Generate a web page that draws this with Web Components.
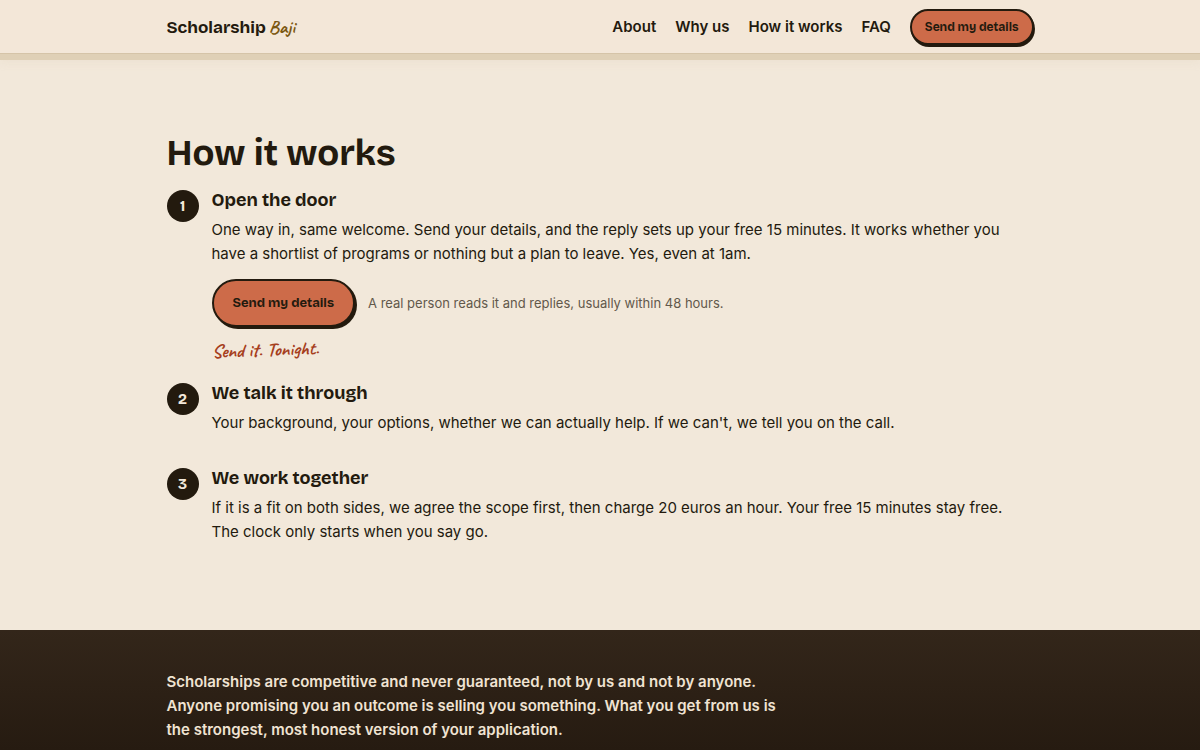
<!DOCTYPE html>
<html lang="en">
<head>
<meta charset="utf-8">
<meta name="viewport" content="width=device-width, initial-scale=1">
<title>Scholarship Baji</title>
<style>
html {
  --ink: #231a0e;
  --paper: #f2e8da;
  --clay: #cd6b49;
  --display: "Bricolage Grotesque", Inter, sans-serif;
  --hand: Caveat, "Caveat Brush", Lato, cursive;
  --page: 867px;
}
body { margin: 0; background: var(--paper); color: var(--ink); font: 15px/24px Inter, sans-serif; }
</style>
</head>
<body>
<baji-header>
  <baji-link href="#about">About</baji-link>
  <baji-link href="#why">Why us</baji-link>
  <baji-link href="#how">How it works</baji-link>
  <baji-link href="#faq">FAQ</baji-link>
  <baji-button slot="action" small>Send my details</baji-button>
</baji-header>
<main>
  <baji-section heading="How it works" id="how">
    <baji-step number="1" heading="Open the door" compact>
      One way in, same welcome. Send your details, and the reply sets up your free 15 minutes. It works whether you have a shortlist of programs or nothing but a plan to leave. Yes, even at 1am.
      <baji-invite slot="extra"></baji-invite>
    </baji-step>
    <baji-step number="2" heading="We talk it through">Your background, your options, whether we can actually help. If we can't, we tell you on the call.</baji-step>
    <baji-step number="3" heading="We work together">If it is a fit on both sides, we agree the scope first, then charge 20 euros an hour. Your free 15 minutes stay free. The clock only starts when you say go.</baji-step>
  </baji-section>
</main>
<baji-footer>Scholarships are competitive and never guaranteed, not by us and not by anyone. Anyone promising you an outcome is selling you something. What you get from us is the strongest, most honest version of your application.</baji-footer>
<script>
const define = (name, render) => customElements.define(name, class extends HTMLElement {
  connectedCallback() {
    if (!this.shadowRoot) this.attachShadow({ mode: "open" }).innerHTML = render(this);
  }
});

define("baji-link", el => `
<style>
:host { display: block; }
a { color: inherit; text-decoration: none; font: 600 15px/24px Inter, sans-serif; white-space: nowrap; }
</style>
<a href="${el.getAttribute("href")}"><slot></slot></a>`);

define("baji-button", () => `
<style>
:host { display: block; flex: none; }
button {
  box-sizing: border-box; display: block; min-height: 48px; padding: 0 19px;
  border: 2px solid var(--ink); border-radius: 24px; background: var(--clay); color: var(--ink);
  box-shadow: 2px 2px 0 var(--ink); font: 700 13px/20px var(--display); white-space: nowrap; cursor: pointer;
}
:host([small]) button { min-height: 36px; padding: 0 13px; font-size: 12px; box-shadow: 1px 2px 0 var(--ink); }
</style>
<button type="button"><slot></slot></button>`);

define("baji-header", () => `
<style>
:host {
  display: block; position: sticky; top: 0; z-index: 1; background: #f3e7d8;
  border-bottom: 1px solid #d5c4a8; box-shadow: 0 6px 0 #dfd0b6, 0 8px 8px #dfd0b640;
}
.bar { max-width: var(--page); margin: 0 auto; padding: 9px 16px 8px; display: flex; align-items: center; justify-content: space-between; }
.brand { color: inherit; text-decoration: none; display: flex; align-items: baseline; gap: 3px; font: 700 17px/24px var(--display); }
.brand span { color: #7b5710; font: 600 19px/24px var(--hand); }
nav { display: flex; align-items: center; gap: 19px; }
</style>
<header class="bar">
  <a class="brand" href="#top">Scholarship <span>Baji</span></a>
  <nav><slot></slot><slot name="action"></slot></nav>
</header>`);

define("baji-section", el => `
<style>
:host { display: block; }
section { max-width: var(--page); margin: 0 auto; padding: 80px 16px 55px; }
h2 { margin: 0 0 14px; font: 700 36px/40px var(--display); }
</style>
<section><h2>${el.getAttribute("heading")}</h2><slot></slot></section>`);

define("baji-step", el => `
<style>
:host { display: grid; grid-template-columns: 32px 1fr; gap: 13px; padding-bottom: 31px; }
:host([compact]) { padding-bottom: 19px; }
.num { width: 32px; height: 32px; margin-top: 2px; border-radius: 50%; background: var(--ink); color: var(--paper); text-align: center; font: 700 15px/32px var(--display); }
h3 { margin: 0 0 6px; font: 700 18px/24px var(--display); }
p { margin: 0; }
</style>
<div class="num">${el.getAttribute("number")}</div>
<div><h3>${el.getAttribute("heading")}</h3><p><slot></slot></p><slot name="extra"></slot></div>`);

define("baji-invite", () => `
<style>
:host { display: block; padding-top: 13px; }
.row { display: flex; align-items: center; flex-wrap: wrap; gap: 13px; }
small { color: #62584b; font: 13px/20px Inter, sans-serif; }
.note { display: table; margin-top: 11px; color: #a63e1d; font: 600 19px/24px var(--hand); transform: rotate(-2deg); }
</style>
<div class="row"><baji-button>Send my details</baji-button><small>A real person reads it and replies, usually within 48 hours.</small></div>
<div class="note">Send it. Tonight.</div>`);

define("baji-footer", () => `
<style>
:host { display: block; background: linear-gradient(#33261a, #261b11 120px); color: #f0e3d2; }
footer { max-width: var(--page); margin: 0 auto; padding: 40px 16px; }
p { margin: 0; max-width: 620px; font: 600 15px/24px Inter, sans-serif; }
</style>
<footer><p><slot></slot></p></footer>`);
</script>
</body>
</html>
